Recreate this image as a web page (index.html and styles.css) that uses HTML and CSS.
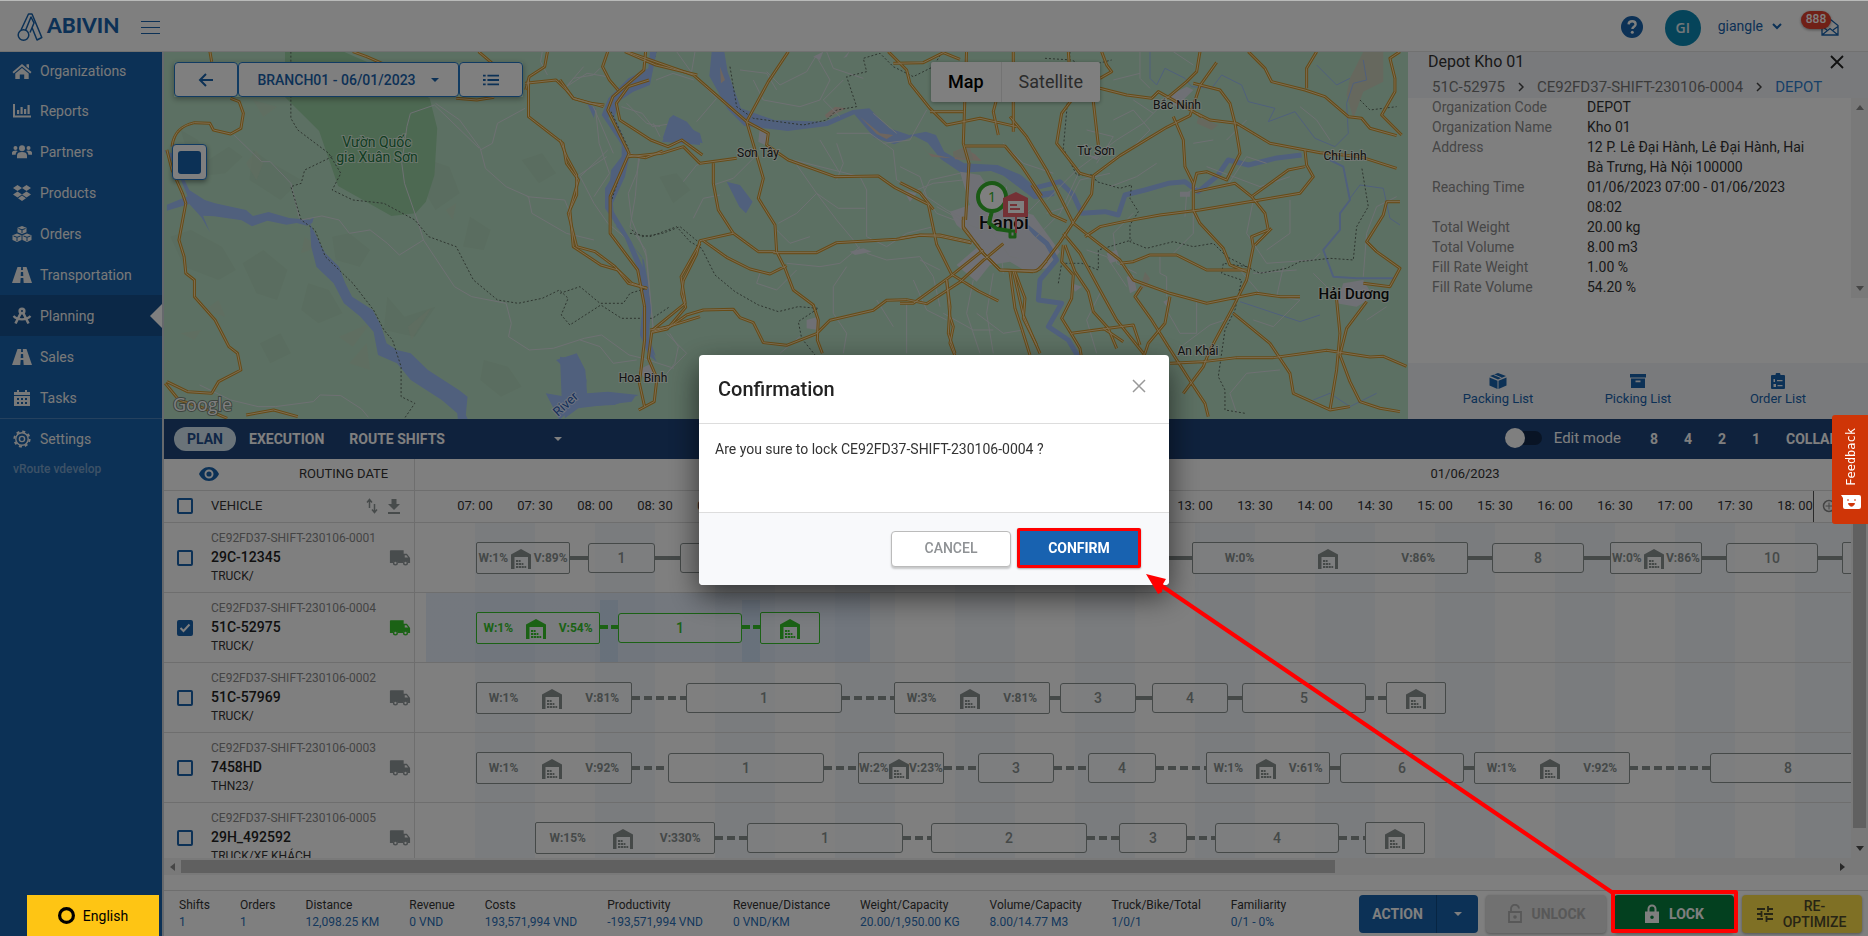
FILE: index.html
```html
<!DOCTYPE html>
<html lang="en">
<head>
<meta charset="utf-8">
<title>Planning</title>
<link rel="stylesheet" href="styles.css">
</head>
<body>
<svg class="defs" aria-hidden="true">
  <symbol id="warehouse" viewBox="0 0 20 20"><path fill="currentColor" d="M0 20V5.500L10 0l10 5.500V20h-3V8H3.500v12z"/><path d="M5 12h4.600M5 15h7.400M5 18h10.200" fill="none" stroke="currentColor" stroke-width="2.200" stroke-dasharray="2.200 .6"/></symbol>
  <symbol id="truck" viewBox="0 0 24 18"><path fill="currentColor" d="M2 1h14v4h3.500L23 9.500V15h-2.100a3 3 0 0 0-5.800 0H9.900a3 3 0 0 0-5.800 0H1V2a1 1 0 0 1 1-1z"/><circle cx="7" cy="15" r="2" fill="none" stroke="currentColor" stroke-width="1.500"/><circle cx="18" cy="15" r="2" fill="none" stroke="currentColor" stroke-width="1.500"/><path d="M17.200 6.500h1.800l1.900 2.500h-3.700z" fill="#fff"/></symbol>
  <symbol id="road" viewBox="0 0 20 18"><path fill="currentColor" d="M5.500 1h3.700l-.2 3h2l-.2-3h3.700L20 17h-8.300l-.4-5H8.700l-.4 5H0zM8.900 6l-.2 4h2.600l-.2-4z" fill-rule="evenodd"/></symbol>
</svg>

<header class="topbar">
  <svg class="logo" viewBox="16 10 28 30"><g fill="none" stroke="#1862ac" stroke-width="1.500" stroke-linejoin="round"><circle cx="23.500" cy="33" r="5.300"/><path d="M21 28l7.500-16h3.500l9.800 23.500-4.800 2.500-5-12.500M25.500 28.500L31 15l3 6-4 9.500"/></g></svg>
  <span class="brand">ABIVIN</span>
  <button class="burger" aria-label="Menu"><i></i><i></i><i></i></button>
  <div class="spacer"></div>
  <svg class="help" viewBox="0 0 22 22"><circle cx="11" cy="11" r="11" fill="#1862ac"/><path d="M7.600 8.300c.3-4 7-4 7 0 0 2.500-3.200 2.300-3.200 4.700" fill="none" stroke="#fff" stroke-width="2.400"/><circle cx="11.300" cy="16.300" r="1.500" fill="#fff"/></svg>
  <span class="avatar">GI</span>
  <button class="user">giangle <svg viewBox="0 0 10 7"><path d="M1 1l4 4 4-4" fill="none" stroke="currentColor" stroke-width="2"/></svg></button>
  <span class="mail"><svg viewBox="0 0 18 18"><path d="M1 7.500L9 1l8 6.500V17H1zM1 8.500l5 3.500M17 8.500L12 12M1 17l8-6.500 8 6.500" fill="none" stroke="#1862ac" stroke-width="1.300"/></svg><b class="badge">888</b></span>
</header>

<div class="shell">
<nav class="sidebar">
  <a href="#"><svg viewBox="0 0 20 18"><path fill="currentColor" d="M10 2l9.500 8-1.200 1.400L10 4.600l-8.300 6.800L.5 10zM14.500 2.200H17v4.300l-2.500-2zM3.300 11.500L10 6l6.700 5.500V17h-4.500v-4.500H7.800V17H3.300z"/></svg>Organizations</a>
  <a href="#"><svg viewBox="0 0 20 18"><path fill="currentColor" d="M1 2h2v11.500h16v2H1zM5 8h2.200v4H5zM8.500 5h2.200v7H8.500zM12 7h2.200v5H12zM15.500 3h2.200v9h-2.200z"/></svg>Reports</a>
  <a href="#"><svg viewBox="0 0 22 18"><g fill="currentColor"><circle cx="11" cy="5" r="3.300"/><circle cx="3.800" cy="4.500" r="2.200"/><circle cx="18.200" cy="4.500" r="2.200"/><path d="M5.500 16v-3c0-3 2-4 5.500-4s5.500 1 5.500 4v3zM0 12V9.500C0 7.500 5 6.500 6.500 8c-2 1-2.300 2.500-2.500 4zM22 12V9.500c0-2-5-3-6.500-1.500 2 1 2.300 2.500 2.500 4z"/></g></svg>Partners</a>
  <a href="#"><svg viewBox="0 0 20 18"><path fill="currentColor" d="M5.500 1L10 4 5.500 7 1 4zM14.500 1L19 4l-4.500 3L10 4zM5.500 7.500l4.500 3-4.500 3-4.500-3zM14.500 7.500l4.500 3-4.500 3-4.500-3zM10 11.500l4 2.700-4 2.800-4-2.800z"/></svg>Products</a>
  <a href="#"><svg viewBox="0 0 20 18"><g fill="currentColor"><path d="M10 1l4.500 1.700v4.600L10 9 5.500 7.300V2.700zM5 8.500l4.500 1.700v4.900L5 17 .5 15.100v-4.900zM15 8.500l4.500 1.700v4.900L15 17l-4.500-1.900v-4.900z"/></g><path d="M6.500 3.500l3.500 1.300 3.500-1.300M10 5v3M1.500 11L5 12.300 8.500 11M5 12.300V16M11.500 11l3.500 1.300 3.500-1.300M15 12.300V16" fill="none" stroke="#1862ac"/></svg>Orders</a>
  <a href="#"><svg viewBox="0 0 20 18"><use href="#road"/></svg>Transportation</a>
  <a href="#" class="active"><svg viewBox="0 0 20 18"><g fill="none" stroke="currentColor" stroke-width="2.600"><circle cx="10" cy="4" r="2.300"/><path d="M8.800 6L3.500 16.500M11.200 6l5.300 10.500"/><path d="M1.500 9c4 4.500 13 4.500 17 0" stroke-width="2.200"/></g></svg>Planning</a>
  <a href="#"><svg viewBox="0 0 20 18"><use href="#road"/></svg>Sales</a>
  <a href="#"><svg viewBox="0 0 20 18"><path fill="currentColor" d="M2 3h3V1h2v2h6V1h2v2h3v3H2z"/><path fill="currentColor" fill-rule="evenodd" d="M2 7h16v10H2zM5 9v2h2V9zM9 9v2h2V9zM13 9v2h2V9zM5 13v2h2v-2zM9 13v2h2v-2zM13 13v2h2v-2z"/></svg>Tasks</a>
  <a href="#" class="settings"><svg viewBox="0 0 20 18"><g fill="none" stroke="currentColor"><circle cx="10" cy="9" r="6.200" stroke-width="1.400"/><circle cx="10" cy="9" r="2.600" stroke-width="1.400"/><circle cx="10" cy="9" r="7.600" stroke-width="2" stroke-dasharray="3 2.970"/></g></svg>Settings</a>
  <p class="version">vRoute vdevelop</p>
</nav>

<main class="main">
<section class="upper">
  <div class="map">
    <svg class="mapart" viewBox="164 52 1244 367" preserveAspectRatio="xMidYMid slice">
      <defs>
        <g id="roads">
          <g transform="translate(160 50) scale(.3444 .3333)">
            <path d="M35 290C40 240 70 225 100 218L145 220 155 240 205 252 235 235 242 190 230 155 205 145M145 5l5 30M560 5l40 15 45 20M925 5l40 35M860 145l60 5 50-8M1125 5l-8 45-45 30-10 40M1300 5l-15 45 20 40 25 30M1060 100l90-10 30 30 20 25 50 15 40 5M1070 90v110l100 80 10 60 35 50-25 90 10 110 80 55 50 15 40 40 45 15M1350 5l90 40 120 30M1420 90l-60 20-35 50 10 50 90 60 50 20 40-20 60 45M1360 315l50 8 50-20M1410 5l-5 55-90 80-15 40 62 130-55 130v110l80 110 20 110v100l-15 130 15 70M1568 800l-140 45-10 80 25 60-8 70-45 25M1430 840l95-80-12-80 55-100M20 300l15 60 30 70 10 30-20 110 15 50 5 50 25 20v50l60 70 40 80 25 20 10 50-65 35-20 35-70-5-60-30M15 1000l40 50 60 20 80 35M250 1095l80-15 70 20"/>
          </g>
          <g transform="translate(560 0) scale(.3333)">
            <path d="M0 240l40 55 90 25M200 155l200 70 160 140 65-120 60-90M560 365l65 35-5 35 65 45 140 50 130-2 50 35 100 50 25 120 45 90 80 50 60 30M560 365l50 170-15 60 50 80 5 80 25 50 25 65 60 45 15 45-3 60 15 40M0 420l20 50 30 55v60L25 640l25 100 55 15 60 45 40 50 55 15M205 470l100-10 65-20 50 50 110-15M460 490v60l15 80 45 70 75 55h50M640 758h130l60-30 180-10 70-12 60 3 95 20M520 700l-100 22-10 40-40 80-5 40 12 40-55 65-45 10M430 722l70 50 70 35 60 15 50-25M270 990l60-10 50-35 50-15 90-2 20 25 40 15 30 60 70 8 90-35 40-40 130-30 40-30 60-2 60 12 100-65 70-65 60-50M985 155l55 55 10 40 60 75 50 50 100-20 110 25M1220 150l-10 280 17 60-10 170M1360 155v240M1320 260l-20 75 15 70M1215 438h120l50 60 60 90M1000 190l90-2 60-30 50 20M1110 335h100M1210 660v25l60 75 50 50 110 3 30-30M1160 840l10 110 10 30-10 50 20 50M1350 815l15 110 20 60 25 80M1365 815l30 80-5 60 40 80"/>
          </g>
          <g transform="translate(900 0) scale(.3333)">
            <path d="M400 815l20-8 60-80 60-90 35-55 5-55 80-60 140-85 70-35 30-90 50-70M575 530l-35-10-70-90 15-90 30-40-10-145M600 265l80 20 75 10 20-20 80 45 50 30M580 305l15 130M605 155l15 40 15 20-35 20M900 155l-10 60-30 30-60 50M820 350l30 70 5 80 25 50v80l20 40 70 75 20 50 50 20M880 250l80 20 30 40 15 60 15 90-40 80-60-25-30 5-10 40M890 340l40 20 80 10 50 30 50 30 150 28 120 12 110 35M1045 155l50 50 20 40 100 25 60 20 70 60 40 5 25 30 80 22M1250 155l-30 50v60M1500 155l-30 20 15 60v40l-40 70 60 60M1215 450l5 45 20 35-40 50-120 20-180 30-120 15-110 20-70 15-45 30M1215 500l-50 10-110 80M1500 605h-40l-10 40-50 80 30 30 70 50-30 55-80-10M330 350l50 60 60 100 80 160 50 40 90 70 40 60 110 40 110 30 150-30 70 10h60M490 700l50 60 60 110 50 90 80 100M500 665l-45-20-60-90M885 575l120-25 50 40 40 50 10 50-50 20 5 30-20 100-40 80-70 130-20 50-60 80M1115 685l-50 50M660 790l40-5 50-20h80l90 45h120M490 735l-5 50 35 40-5 70-30 60 25 40 30 50 10 60M495 735l30 80 40 60 15 60 45 50 25 60M515 1000l110-15 75-10 20 60M725 860l-20 30 50 70 50 80 70 110 40 60 10 40M810 890l-15 80-50 60-10 30-60 80M610 985l60 40M0 548l60 30 40 50M0 715l60-10h60l90 20M190 650v30l60 80 50 50 100 5M0 910h40l110-80 100-80M140 840l10 80-5 80 20 60M340 815l30 130 50 115M810 1090l100-5 100-12h110l160-22 130 20 40-2 70 30M1000 940l110 90 60 90 10 60 110 50 60-10M1310 900l10 100-10 110-20 120M1400 905l-60 80-20 80 30 80 30 60 60 20 60 10"/>
          </g>
        </g>
      </defs>
      <path fill="#b9e1c6" d="M164 52h1244v367H164z"/>
      <g transform="translate(160 50) scale(.3444 .3333)">
        <g fill="#b0d3b9" opacity=".45"><path d="M60 240l50 30 30 60 60-40 40 30-50 50-90 10zM270 300l40 30 100 60-60 60-90-60zM30 560l60-20 90 50 40 70-50 30-100-40zM240 640l60-40 70 60-30 90-60-20zM430 700l60 20 40 70-70 30-50-40zM660 740l50 60 90-30-60 90-90-20zM780 330l60 20 30 80-70 50-40-70zM1050 330l60-20 40 60-50 30zM500 560l50-10 60 50-30 50-70-20zM900 500l60 40-20 60-60-10zM940 930l70 20 40 60-60 30-60-50zM290 880l60-30 30 60-60 30zM1450 380l50-10 40 50-50 40z"/></g>
        <g fill="#c6dac0" opacity=".5"><path d="M250 340l30-40 20 40-20 50zM520 860l90-40-50 70zM720 830l70-60-60 100zM130 780l40-30 20 50zM550 940l50-60 10 80zM270 150l70 20-40 30zM60 850l60-10-20 30zM830 480l30-20-10 50zM420 560l40 30-50 20z"/></g>
        <path fill="#9bd2a5" d="M363 5h170l110 50 140 90 22 90-8 140-25 80-30 35-70 8-155-90-55-165-100-103z"/>
        <g fill="#a0c0fa"><path d="M10 300l25 10 50 110 45 30 30 10 90 20 20 18 45-12 60 18 60 5 12-8-5 18-15 8-30-8-30 5-55-12-45 17-30-18-80-12-32-2 20 50-25-45-35-40-65 20v-18l60-25-35-90zM435 520l25 50 20 40 40 40 18 50 20 40 60 40 25 50 15 50 30 20 40 10 50 50 90 60 25 20-5 55 20 45h-40l-5-50-45-40-90-60-40-50-55-25-13-70-38-45-48-40-30-60-50-50-15-60zM1150 930l60-20 25 50 5 70 60-5 90 10-70 30-120 5-40 40-40-80 60 10 10-70zM1490 195l40 20 38 50v20l-110-10zM1400 60l20 30-85 60-15 50 45 110-15 70-35 80 5 60 85 110 20 110-5 120 20 60-25-30-10-160-5-110-75-90-25-80 10-90 45-60-50-130 25-55zM1240 160l25 15-5 30z"/></g>
        <g class="minor"><path d="M215 255l60 60 20 20h25l60 65 25 105M410 510l60-12 50 12 30 40 60-10 50 40 35 35 70-45M765 570l-15-50-40-120-8-60 15-110 10-40 70-25 130 130M765 570l90 140 50 30 100 20 15 60-8 40 60 40 70-5 90-30 50-10 80 60 40 10 90 30M800 160l70 50 60 85 15 60 60 55 65 30 10 50 100 60 80 20M1060 175l-80 45-15 60-35 20M1065 440l110 10 20 50M1230 50l-50 60M1265 180l10 100 30 90-45 70M1300 300l-80 80 40 80 40 60 60 50M1390 320l-10 120-15 90 45 70 22 240M1480 850l25 40-10 50-30 40M115 1005l90 45 80 20h50l110-15 20-20 60 2 60 40 20 25M1110 5l-5 30 20 40M1440 90l50-20 60 20M1340 170l60 20 30 40 60-10M1180 110l60-40 60 10"/></g>
        <path class="border" d="M380 5v200l20 35 90 70 35 60-25 50 60 30 90 10 90 50 40 50 80 30 50 100 70 60 60 10 70-15 50-25 25 25-20 50 25 30 90-60 60 40 90 0 50-35M500 320l-80 40-10 40-30 10 30 100 40 30 30 80 80 80 60 80 30 60 25 30 25 80v90l40 20-60 90"/>
        <path class="border" d="M1370 540l30 20 60-10 50-20 58 50M1440 5l-20 90-90 40-25 40 55 120-50 160"/>
      </g>
      <g transform="translate(560 0) scale(.3333)">
        <g fill="#a0c0fa"><path d="M455 155h38l10 60 40 110 100 35 150 5 85-35 50-5 60 60 60 20 50-10 30 10 25 50 60 35 100 5 70 30 60 50 40-5v18l-60 10-90-70-40-15-90 5-60-40-40-50-40-20-60 25-60-20-60-70-80 35-120 15-130-15-50-50-55-100zM270 155h20l-20 100-50 20-60 40-15 40 60 90-5 50-45 80v50l60 100 40 90 20 110-15 90 30 70-25-20-25-60 10-110-10-70-45-110-60-90v-60l50-80v-50l-60-90 20-50 60-60 60-30zM340 345l20 25 60 30 8 30-40-10-80-5 20-60zM500 545l40 10 38 50-20 35-20-20zM0 1070l60 10 20 60-5 50 60-10 90 10-10 15-160 20-40 30-10-60z"/></g>
        <path fill="#dccabd" d="M480 200l15 40-12 10zM795 345l30-25 35 5-60 30zM900 350l60 50 40 5-20 12-30-15zM1045 400l60 60 70 15-60-5zM1180 455l30-12 35 20 20 20-80-5z"/>
        <g class="minor"><path d="M350 155l50 70 70 70-60 70M620 215l40 40 80-40 30-50M580 240l30 60 110 20 60-20 30-60-40-70M800 155l20 50 90 30M200 310l60 60 40 10M20 260l20-25 60-10 20-20M405 155l-10 60M540 210l80 10 30 50M50 530l90-60M100 320l60 140M210 460l30 10-10 50-25 60 10 80 45 110 20 220M370 545l40-50 100-20M460 555l60-20 70-70M700 480l70 100-60 60-55 30M700 480l200 50 20 40v140l60 30 60-40 80-20M770 580l60 80 50 60 20 30M770 580l65 45h80M830 430l20 60-20 50M830 400l100 0 70 50 10 90M840 520l-60-100M940 340l70 60M1100 330l-50 90-80 10M1010 540l60 30 50-20 90-10M920 760l60 20 100-10 40 60 20 90M680 790l100 10 60-10 60-50M650 690l40 40 60-20M600 820l-10 30 60 20 60-60M400 655l30-60 50-10M860 800l-40 60 0 80 40 60-10 60M1080 780l60 30M1200 520l-90 20-20 40 40 60 80 30M1240 840l-20 100 40 120M1300 820l-20 120 20 120M320 1000l60 60-60 60M60 1020l60 20 40 50 70-10M660 1060l60-50M850 240l-60 60 50 50M300 410l-20-40M950 900l50 80M1040 910l0 150M1440 600l-60 60M1150 940l90 50 60 0M1250 620l80 70 90 20M1340 560l-20 160 10 100M1230 560l50 100 100 60"/></g>
        <path fill="#dfe1ea" d="M1200 515l60 10 60 90 100 30 80 110-40 50-60 10-50-30-60 10-40 50-60-50 70-60-70-60-20-40 60-20zM740 960l35-10v40l-35-5zM600 380l25 20-10 35-20-10zM860 170l10-18-20 22zM760 170l30-15-10 25zM1030 570l40 10-20 25zM235 1110l40-20 20 50-30 10zM870 755l40-10 25 10-50 10z"/>
        <path class="border" d="M510 200l20 120 50 35 150 20 70-15 30-30 60-10-30-90 60-15-10-40 50-15 40 40 60 30 60-30 30-50M210 700l60 10 80-30 40 45 35 20 40 80 60 50 70 40 60 20 60-15 60 5-60 40 10 50 40 50M0 880l60-20 60 50h70l20-30 50-15"/>
        <path class="minor" d="M1130 620l110 60 110 30 90-10M1230 740l60-80 90-10M1290 690l60 80 50 10"/>
      </g>
      <g transform="translate(900 0) scale(.3333)">
        <path fill="#ccd0bd" d="M1390 155h60v90l-60 30-30 80-20-70 10-50zM895 350l60 25-20 15-45-20zM735 815l15 20-10 25-20 10zM160 455l50-15 10 40-60-10z"/>
        <g class="water"><path d="M300 510l80 60 40-10 60-15 40 40 25 55 70-5 40 10 20-60 60-15 70-20 50-5 40 30 60-50 30-45 60 15 80-20 80-10"/><path d="M380 680l60 50 30 50-50 60-5 60 70 10-40 70 60 40 30 50"/><path class="stream" d="M1290 480l40 20 20 100-30 40v50l-50 60 30 80 70 5h110"/><path class="brook" d="M750 155v80l20 20 25-50 60 30 20 25 60 5 30-40 60 30 20 50 80 20-20 40 80-30 60 80 60 25 40-40-5-90 20-60 40-10-10-60"/><path class="brook" d="M1350 595l30-40 70 10 20 90 30 20M1250 195l60 60 40-20M1020 905l180 60 60-20M1240 1200l50-20 60 40 80-40"/></g>
        <g class="minor"><path d="M0 500l60 30 20 60 60 40 40 20M440 600l90-90 60-45 60-45 80-50 80-80M440 640l60-20 40-80 90-20M560 390l80 20-50 80M640 360l60-30 50 60-60 60-60 30M630 560l80-30 60-40M700 300l60 40M920 500l160 60 90-30M940 420l-60 10M780 770v50l20 10 0 60M980 420l60-60M890 560l-30 20-5 70M1060 600l-20 100 60 90 140-10 20-20M1170 600v100l-70 50M1390 830l10-130 30-80 60-30M700 640l-60 60 10 90 60 30M560 750l60 20 60 90M880 640v60l-60 60M1020 810l60 70 120 20M1200 900l-80 80-60-20M850 1035l80-60 60-20M990 1180l50-60 100-10M1240 820l60 60 30 10M1130 890l20-90M600 880l-40 80 30 100M800 930l40 70 50 0v-100M720 155l0 80 30 30M820 155l60 40M400 720l80-80 60-130M460 520l-90-30-60-60M230 940l80 60 60-10M40 840l40 90 60 30M1010 1240l-20-60M1400 960l60-40M1060 820l130-10M1200 320l50 40 40 60M640 240l80-20M980 560l60-90 60 20"/></g>
        <path fill="#dfe1ea" d="M800 290l60-30 20 10-50 50zM560 465l40 5-10 10zM430 740l-60-70-30 60 20 50 60 10zM620 760l30-10 10 30-30 10zM680 830l20-5 10 45-20 10zM790 905l20-10-5 30zM1330 850l60-10 30 50-50 30-60-10zM840 575l30 0v15h-30zM515 850l30 10-20 15z"/>
        <path class="border" d="M510 155l-10 180-10 110 40 80 50 0 10 20 70 20 35-10-5 40 25 40-25 40 0 50 50 20 80-20 60 15 60-10 40 40 100 50 80-15 40-20 90-10 70 5 10-100 35-60-20-120M475 850l10-60 60 0 50 20v-60l100-30M1040 800l-70-10-5 30 60 20-20 90-30 60-20 140 20 40 0 60 60 10M435 175l80 5 40 20 80-20M1380 300l30 30 80-10"/>
      </g>
      <use href="#roads" class="roadEdge"/>
      <use href="#roads" class="roadFill"/>
      <g class="places">
        <text x="758" y="157">Sơn Tây</text><text x="643" y="382">Hoa Binh</text><text x="1177" y="109">Bắc Ninh</text><text x="1096" y="155">Từ Sơn</text><text x="1345" y="160">Chí Linh</text><text x="1198" y="355">An Khải</text>
        <text class="town" x="1354" y="299">Hải Dương</text><text class="city" x="1004" y="229">Hanoi</text>
        <text class="park" x="377" y="147">Vườn Quốc</text><text class="park" x="377" y="162">gia Xuân Sơn</text>
        <text class="river" transform="translate(558 417) rotate(-43)">River</text>
        <text class="google" x="173" y="411">Google</text>
      </g>
      <g fill="none" stroke="#36b52c" stroke-width="4"><path d="M992 211l-3 12 8 6 14 2"/><path d="M1010 231h5v6h-5z" stroke-width="3"/><circle cx="992" cy="197" r="14" fill="#fff"/></g>
      <text class="pin" x="992" y="202">1</text>
      <g fill="#e8626a"><path fill-rule="evenodd" d="M1003 198l13-6 12 6v19h-25zM1008 201v12h16v-12z"/><path d="M1008 201h16v12h-16z" fill="#fff"/><path d="M1010 204h7v2h-7zM1010 208h10v2h-10zM1015 217h2v16h-2z"/></g>
    </svg>
    <div class="mapbar">
      <button class="mbtn" aria-label="Back"><svg viewBox="0 0 16 14"><path d="M15 7H2M8 1L2 7l6 6" fill="none" stroke="currentColor" stroke-width="2"/></svg></button>
      <button class="mbtn wide">BRANCH01 - 06/01/2023 <svg viewBox="0 0 10 6"><path fill="currentColor" d="M1 1h8L5 5z"/></svg></button>
      <button class="mbtn" aria-label="List"><svg viewBox="0 0 18 14"><path d="M5 2h13M5 7h13M5 12h13M0 2h3M0 7h3M0 12h3" fill="none" stroke="currentColor" stroke-width="2"/></svg></button>
    </div>
    <button class="layer" aria-label="Layers"><i></i></button>
    <div class="maptype"><button class="on">Map</button><button>Satellite</button></div>
  </div>

  <aside class="panel">
    <div class="phead">
      <div class="ptitle"><span>Depot Kho 01</span><button aria-label="Close"><svg viewBox="0 0 14 14"><path d="M1 1l12 12M13 1L1 13" stroke="#222" stroke-width="1.800"/></svg></button></div>
      <div class="crumbs"><span>51C-52975</span><svg viewBox="0 0 6 10"><path d="M1 1l4 4-4 4" fill="none" stroke="#444" stroke-width="1.500"/></svg><span>CE92FD37-SHIFT-230106-0004</span><svg viewBox="0 0 6 10"><path d="M1 1l4 4-4 4" fill="none" stroke="#444" stroke-width="1.500"/></svg><a href="#">DEPOT</a></div>
    </div>
    <div class="pscroll">
      <dl>
        <dt>Organization Code</dt><dd>DEPOT</dd>
        <dt>Organization Name</dt><dd>Kho 01</dd>
        <dt>Address</dt><dd>12 P. Lê Đại Hành, Lê Đại Hành, Hai Bà Trưng, Hà Nội 100000</dd>
        <dt>Reaching Time</dt><dd>01/06/2023 07:00 - 01/06/2023 08:02</dd>
        <dt>Total Weight</dt><dd>20.00 kg</dd>
        <dt>Total Volume</dt><dd>8.00 m3</dd>
        <dt>Fill Rate Weight</dt><dd>1.00 %</dd>
        <dt>Fill Rate Volume</dt><dd>54.20 %</dd>
      </dl>
      <div class="vbar faint"><i class="up"></i><i class="down"></i></div>
    </div>
    <div class="pfoot">
      <button><svg viewBox="0 0 18 16"><path fill="currentColor" d="M9 0l8 3-8 3.500L1 3zM.5 4.500l8 3.300V16l-8-3.500zM17.500 4.500l-8 3.300V16l8-3.500z"/><path d="M4.500 1.500l8 3.300" stroke="#f3f5f9"/></svg>Packing List</button>
      <button><svg viewBox="0 0 18 16"><path fill="currentColor" d="M1 1h16v3.500H1z"/><path fill="currentColor" fill-rule="evenodd" d="M2 5.500h14V15H2zM6.500 7.500v1.700h5V7.500z"/></svg>Picking List</button>
      <button><svg viewBox="0 0 18 16"><path fill="currentColor" fill-rule="evenodd" d="M3 2h3.500a2.500 2.500 0 0 1 5 0H15a1 1 0 0 1 1 1v12a1 1 0 0 1-1 1H3a1 1 0 0 1-1-1V3a1 1 0 0 1 1-1zM4.500 6v3H6V6zM8 7v1.300h5.500V7zM4.500 11v3H7v-3zM8.500 12v1.300h5V12z"/></svg>Order List</button>
    </div>
  </aside>
</section>

<section class="toolbar">
  <button class="pill">PLAN</button>
  <button>EXECUTION</button>
  <button class="shifts">ROUTE SHIFTS <svg viewBox="0 0 10 6"><path fill="currentColor" d="M1 1h8L5 5z"/></svg></button>
  <div class="spacer"></div>
  <label class="switch"><input type="checkbox"><span>Edit mode</span></label>
  <div class="zooms"><button>8</button><button>4</button><button>2</button><button>1</button></div>
  <button class="collapse">COLLAPSE ALL</button>
</section>

<section class="gantt">
  <div class="grow head1">
    <div class="left"><svg class="eye" viewBox="0 0 20 14"><path fill="#1862ac" fill-rule="evenodd" d="M10 0c5 0 8.500 3.500 10 7-1.500 3.500-5 7-10 7S1.500 10.500 0 7c1.500-3.500 5-7 10-7zm0 2.500a4.500 4.500 0 1 0 0 9 4.500 4.500 0 0 0 0-9z"/><circle cx="10" cy="7" r="2.600" fill="#1862ac"/></svg><span>ROUTING DATE</span></div>
    <div class="date">01/06/2023</div>
  </div>
  <div class="grow head2">
    <div class="left"><input type="checkbox" aria-label="Select all"><span>VEHICLE</span><svg class="sort" viewBox="0 0 12 16"><path d="M3.500 10V2M1 4.500L3.500 1.500 6 4.500M8.500 6v8M6 11.500l2.500 3 2.500-3" fill="none" stroke="#8f9696" stroke-width="1.500"/></svg><svg class="dl" viewBox="0 0 14 16"><path fill="#8f9696" d="M4.500 1h5v5H13l-6 6-6-6h3.500zM1 14h12v2H1z"/></svg></div>
    <div class="hours"><span>07: 00</span><span>07: 30</span><span>08: 00</span><span>08: 30</span><span>09: 00</span><span>09: 30</span><span>10: 00</span><span>10: 30</span><span>11: 00</span><span>11: 30</span><span>12: 00</span><span>12: 30</span><span>13: 00</span><span>13: 30</span><span>14: 00</span><span>14: 30</span><span>15: 00</span><span>15: 30</span><span>16: 00</span><span>16: 30</span><span>17: 00</span><span>17: 30</span><span>18: 00</span></div>
    <div class="zin"><svg viewBox="0 0 14 14"><path d="M7 3.500v7M3.500 7h7" stroke="#888"/><circle cx="7" cy="7" r="5.500" fill="none" stroke="#888" stroke-width="1.500"/></svg></div>
  </div>
  <div class="gscroll">
    <div class="rows">
      <div class="grow row">
        <div class="left"><input type="checkbox" aria-label="29C-12345"><div class="veh"><small>CE92FD37-SHIFT-230106-0001</small><strong>29C-12345</strong><span>TRUCK/</span></div><svg class="trk"><use href="#truck"/></svg></div>
        <div class="lane"><div class="depot" style="width:94px"><b>W:1%</b><svg><use href="#warehouse"/></svg><b>V:89%</b></div><i class="ln" style="width:18px"></i><div class="stop" style="width:67px">1</div><i class="ln" style="width:25px"></i><div class="stop" style="width:60px">2</div><i class="ln" style="width:452px"></i><div class="depot" style="width:276px"><b>W:0%</b><svg><use href="#warehouse"/></svg><b>V:86%</b></div><i class="ln" style="width:24px"></i><div class="stop" style="width:92px">8</div><i class="ln" style="width:26px"></i><div class="depot" style="width:92px"><b>W:0%</b><svg><use href="#warehouse"/></svg><b>V:86%</b></div><i class="ln" style="width:24px"></i><div class="stop" style="width:92px">10</div><i class="ln" style="width:24px"></i><div class="depot" style="width:92px"></div></div>
      </div>
      <div class="grow row sel">
        <div class="left"><input type="checkbox" checked aria-label="51C-52975"><div class="veh"><small>CE92FD37-SHIFT-230106-0004</small><strong>51C-52975</strong><span>TRUCK/</span></div><svg class="trk"><use href="#truck"/></svg></div>
        <div class="lane"><div class="depot" style="width:124px"><b>W:1%</b><svg><use href="#warehouse"/></svg><b>V:54%</b></div><i class="ln" style="width:18px"></i><div class="stop" style="width:124px">1</div><i class="ln" style="width:18px"></i><div class="depot" style="width:60px"><svg><use href="#warehouse"/></svg></div></div>
      </div>
      <div class="grow row">
        <div class="left"><input type="checkbox" aria-label="51C-57969"><div class="veh"><small>CE92FD37-SHIFT-230106-0002</small><strong>51C-57969</strong><span>TRUCK/</span></div><svg class="trk"><use href="#truck"/></svg></div>
        <div class="lane"><div class="depot" style="width:156px"><b>W:1%</b><svg><use href="#warehouse"/></svg><b>V:81%</b></div><i class="ln dash" style="width:54px"></i><div class="stop" style="width:156px">1</div><i class="ln dash" style="width:52px"></i><div class="depot" style="width:156px"><b>W:3%</b><svg><use href="#warehouse"/></svg><b>V:81%</b></div><i class="ln" style="width:10px"></i><div class="stop" style="width:76px">3</div><i class="ln" style="width:16px"></i><div class="stop" style="width:76px">4</div><i class="ln" style="width:14px"></i><div class="stop" style="width:124px">5</div><i class="ln dash" style="width:20px"></i><div class="depot" style="width:60px"><svg><use href="#warehouse"/></svg></div></div>
      </div>
      <div class="grow row">
        <div class="left"><input type="checkbox" aria-label="7458HD"><div class="veh"><small>CE92FD37-SHIFT-230106-0003</small><strong>7458HD</strong><span>THN23/</span></div><svg class="trk"><use href="#truck"/></svg></div>
        <div class="lane"><div class="depot" style="width:156px"><b>W:1%</b><svg><use href="#warehouse"/></svg><b>V:92%</b></div><i class="ln dash" style="width:36px"></i><div class="stop" style="width:156px">1</div><i class="ln dash" style="width:34px"></i><div class="depot" style="width:86px"><b>W:2%</b><svg><use href="#warehouse"/></svg><b>V:23%</b></div><i class="ln dash" style="width:34px"></i><div class="stop" style="width:76px">3</div><i class="ln dash" style="width:34px"></i><div class="stop" style="width:68px">4</div><i class="ln dash" style="width:50px"></i><div class="depot" style="width:124px"><b>W:1%</b><svg><use href="#warehouse"/></svg><b>V:61%</b></div><i class="ln" style="width:10px"></i><div class="stop" style="width:124px">6</div><i class="ln" style="width:10px"></i><div class="depot" style="width:156px"><b>W:1%</b><svg><use href="#warehouse"/></svg><b>V:92%</b></div><i class="ln dash" style="width:80px"></i><div class="stop" style="width:156px">8</div></div>
      </div>
      <div class="grow row">
        <div class="left"><input type="checkbox" aria-label="29H_492592"><div class="veh"><small>CE92FD37-SHIFT-230106-0005</small><strong>29H_492592</strong><span>TRUCK/XE KHÁCH</span></div><svg class="trk"><use href="#truck"/></svg></div>
        <div class="lane late"><div class="depot" style="width:180px"><b>W:15%</b><svg><use href="#warehouse"/></svg><b>V:330%</b></div><i class="ln dash" style="width:32px"></i><div class="stop" style="width:156px">1</div><i class="ln dash" style="width:28px"></i><div class="stop" style="width:156px">2</div><i class="ln dash" style="width:32px"></i><div class="stop" style="width:68px">3</div><i class="ln dash" style="width:28px"></i><div class="stop" style="width:124px">4</div><i class="ln dash" style="width:26px"></i><div class="depot" style="width:60px"><svg><use href="#warehouse"/></svg></div></div>
      </div>
    </div>
    <div class="vbar"><b></b><i class="down"></i></div>
  </div>
  <div class="hbar"><i class="lt"></i><div class="htrack"><b></b></div><i class="rt"></i></div>
</section>

<footer class="stats">
  <div><span>Shifts</span><em>1</em></div>
  <div><span>Orders</span><em>1</em></div>
  <div><span>Distance</span><em>12,098.25 KM</em></div>
  <div><span>Revenue</span><em>0 VND</em></div>
  <div><span>Costs</span><em>193,571,994 VND</em></div>
  <div><span>Productivity</span><em>-193,571,994 VND</em></div>
  <div><span>Revenue/Distance</span><em>0 VND/KM</em></div>
  <div><span>Weight/Capacity</span><em>20.00/1,950.00 KG</em></div>
  <div><span>Volume/Capacity</span><em>8.00/14.77 M3</em></div>
  <div><span>Truck/Bike/Total</span><em>1/0/1</em></div>
  <div><span>Familiarity</span><em>0/1 - 0%</em></div>
  <section class="actions">
    <div class="split"><button>ACTION</button><button aria-label="More actions"><svg viewBox="0 0 10 6"><path fill="currentColor" d="M1 1h8L5 5z"/></svg></button></div>
    <button class="act unlock" disabled><svg viewBox="0 0 16 20"><path d="M4 8V5a4 4 0 0 1 8-.5M2 8h12v10H2z" fill="none" stroke="currentColor" stroke-width="1.800"/><circle cx="8" cy="13" r="1.800" fill="currentColor"/></svg>UNLOCK</button>
    <button class="act lock"><svg viewBox="0 0 16 20"><path d="M4.500 8V5a3.500 3.500 0 0 1 7 0v3" fill="none" stroke="currentColor" stroke-width="2"/><path fill="currentColor" fill-rule="evenodd" d="M1 7.500h14V19H1zM8 11.400a1.800 1.800 0 1 0 0 3.600 1.800 1.800 0 0 0 0-3.600z"/></svg>LOCK</button>
    <button class="act reopt"><svg viewBox="0 0 16 16"><path d="M0 3h8M11 3h5M11 0v6M0 8h4M7 8h9M4.500 5v6M0 13h6M9 13h7M9.500 10v6" fill="none" stroke="currentColor" stroke-width="1.800"/></svg><span>RE-OPTIMIZE</span></button>
  </section>
</footer>
</main>
</div>

<div class="scrim">
  <div class="modal" role="dialog" aria-label="Confirmation">
    <div class="mhead"><h2>Confirmation</h2><button aria-label="Close dialog"><svg viewBox="0 0 14 14"><path d="M1 1l12 12M13 1L1 13" stroke="#999" stroke-width="1.500"/></svg></button></div>
    <p>Are you sure to lock CE92FD37-SHIFT-230106-0004 ?</p>
    <div class="mfoot"><button class="cancel">CANCEL</button><button class="confirm">CONFIRM</button></div>
  </div>
</div>

<button class="lang"><svg viewBox="0 0 16 16"><ellipse cx="8" cy="8" rx="6.500" ry="6.500" fill="none" stroke="#000" stroke-width="3"/></svg>English</button>
<button class="feedback"><svg viewBox="0 0 20 16"><path fill="#fff" d="M0 1h18a2 2 0 0 1 2 2v10a2 2 0 0 1-2 2H4a2 2 0 0 1-2-2V4z"/><path d="M7 5v2M14 5v2M7.500 9.500c1 3.500 5 3.500 6 0z" stroke="#cf3507" fill="#cf3507"/></svg><span>Feedback</span></button>
<i class="frame"></i>
<svg class="arrow" viewBox="0 0 470 322"><path d="M10 8L467 319" stroke="#f00" stroke-width="4"/><path fill="#f00" d="M0 0l20 5-3 5-1 8-4 2z"/></svg>
</body>
</html>
```
FILE: styles.css
```css
* { box-sizing: border-box; }
body { margin: 0; height: 100vh; display: flex; flex-direction: column; overflow: hidden; background: #fff; font: 14px/20px Roboto, "Noto Sans", sans-serif; color: #333; }
button { border: 0; background: none; padding: 0; margin: 0; font: inherit; color: inherit; cursor: pointer; }
a { text-decoration: none; }
svg { flex: none; display: block; }
em, i { font-style: normal; }
.defs { position: absolute; width: 0; height: 0; }
.spacer { flex: 1; }

.topbar { flex: none; height: 52px; display: flex; align-items: center; padding: 2px 29px 0 16px; border-top: 1px solid #b9bab9; border-bottom: 1px solid #e2e2e2; }
.logo { width: 28px; height: 30px; }
.brand { margin: 0 0 4px 3px; font: 900 21px/24px Lato, sans-serif; color: #1862ac; }
.burger { margin-left: 22px; display: flex; flex-direction: column; gap: 5px; width: 19px; }
.burger i { height: 1px; background: #1862ac; }
.help { width: 22px; height: 22px; margin-right: 22px; }
.avatar { width: 36px; height: 36px; border-radius: 50%; background: #0a89b5; color: #e8eef2; display: grid; place-items: center; margin: 2px 17px 0 0; font: 600 14px/20px "Open Sans", sans-serif; }
.user { display: flex; align-items: center; gap: 9px; color: #1862ac; margin: 0 39px 2px 0; }
.user svg { width: 10px; height: 7px; }
.mail { position: relative; }
.mail svg { width: 18px; height: 18px; }
.badge { position: absolute; right: 8px; bottom: 7px; width: 30px; height: 18px; border-radius: 9px; background: #e0402f; color: #fff; font: 500 12px/17px Roboto, sans-serif; text-align: center; box-shadow: 0 1px 3px #0006; }

.shell { flex: 1; min-height: 0; display: flex; }
.sidebar { flex: none; width: 164px; background: #1862ac; border-right: 2px solid #ccd2da; color: #fff; }
.sidebar a { height: 41px; display: flex; align-items: center; gap: 8px; padding-left: 12px; color: #f2f2f2; position: relative; }
.sidebar a:first-child { height: 38px; }
.sidebar svg { width: 20px; height: 18px; }
.sidebar .active { background: #16508e; }
.sidebar .active::after { content: ""; position: absolute; right: 0; border: 12px solid transparent; border-right-color: #fff; border-left: 0; }
.sidebar .settings { border-top: 1px solid #4a82bc; }
.version { margin: 0; padding: 1px 13px; font-size: 12px; line-height: 18px; font-weight: 500; color: #7ba3cc; }

.main { flex: 1; min-width: 0; display: flex; flex-direction: column; }
.upper { flex: none; display: flex; height: 367px; }
.map { flex: 1; min-width: 0; position: relative; overflow: hidden; }
.mapart { width: 100%; height: 100%; }
.mapart path { vector-effect: non-scaling-stroke; stroke-linejoin: round; }
.minor { fill: none; stroke: #dde2e6; stroke-width: 1; }
.border { fill: none; stroke: #5c6b60; stroke-width: 1; stroke-dasharray: 2 2; }
.water { fill: none; stroke: #a0c0fa; stroke-width: 5; }
.stream { stroke-width: 2; }
.brook { stroke-width: 1; }
.roadEdge { fill: none; stroke: #cf962f; stroke-width: 3; }
.roadFill { fill: none; stroke: #f9dca6; stroke-width: 1; }
.places { font: 12px Roboto, sans-serif; text-anchor: middle; fill: #222; stroke: #fff9; stroke-width: 2; paint-order: stroke; }
.town { font-size: 15px; font-weight: 500; fill: #111; }
.city { font-size: 19px; font-weight: 500; fill: #111; }
.park { font-size: 14px; fill: #257a43; }
.river { font-size: 13px; fill: #2c5fb5; text-anchor: start; }
.google { font: 500 18px "Open Sans", sans-serif; fill: #fff; stroke: #7b8a7f; text-anchor: start; }
.pin { font: 14px "Noto Sans", sans-serif; fill: #36b52c; text-anchor: middle; }
.mapbar { position: absolute; left: 10px; top: 10px; display: flex; box-shadow: 0 2px 6px #0005; }
.mbtn { width: 64px; height: 35px; border: 1px solid #2276c4; border-radius: 4px; background: #fff; color: #1862ac; display: flex; align-items: center; justify-content: center; gap: 14px; }
.mbtn.wide { width: 221px; font-weight: 500; }
.mbtn svg { width: 16px; height: 14px; }
.mbtn.wide svg { width: 10px; height: 6px; }
.layer { position: absolute; left: 8px; top: 92px; width: 35px; height: 36px; border: 1px solid #2276c4; border-radius: 4px; background: #fff; display: grid; place-items: center; box-shadow: 0 2px 5px #0006; }
.layer i { width: 23px; height: 23px; border-radius: 3px; background: #1862ac; }
.maptype { position: absolute; right: 308px; top: 10px; height: 40px; display: flex; background: #fff; border-radius: 2px; box-shadow: 0 1px 4px #0005; font-size: 18px; color: #565656; }
.maptype button { padding: 0 17px; }
.maptype .on { font-weight: 500; color: #000; border-right: 1px solid #e6e6e6; }

.panel { flex: none; width: 460px; display: flex; flex-direction: column; background: #fff; }
.phead { background: #f3f5f9; height: 46px; padding-left: 20px; }
.ptitle { display: flex; justify-content: space-between; align-items: center; padding-right: 24px; font-size: 16px; height: 20px; }
.ptitle svg { width: 14px; height: 14px; }
.crumbs { display: flex; align-items: center; gap: 13px; padding-left: 4px; font-size: 15px; height: 30px; color: #777; }
.crumbs svg { width: 6px; height: 10px; }
.crumbs a { color: #2f80d0; }
.pscroll { display: flex; height: 200px; }
.pscroll dl { flex: 1; margin: -1px 0 0 24px; display: grid; grid-template-columns: 155px 225px; align-content: start; }
.pscroll dt { color: #8c8c8c; }
.pscroll dd { margin: 0; }
.vbar { flex: none; width: 17px; background: #f3f3f3; position: relative; display: flex; flex-direction: column; align-items: center; }
.vbar b { width: 13px; height: 305px; background: #c1c1c1; }
.up, .down { border: 4px solid transparent; }
.up { border-bottom: 5px solid #8c8c8c; border-top: 0; margin-top: 7px; }
.down { border-top: 5px solid #505050; border-bottom: 0; margin-top: auto; margin-bottom: 7px; }
.faint .down { border-top-color: #8c8c8c; }
.pfoot { margin-top: auto; height: 56px; background: #f3f5f9; padding: 0 20px; display: grid; grid-template-columns: repeat(3, 1fr); }
.pfoot button { display: flex; flex-direction: column; align-items: center; padding-top: 10px; font-size: 13px; line-height: 20px; color: #1862ac; }
.pfoot svg { width: 18px; height: 16px; }

.toolbar { flex: none; height: 40px; background: #1e447a; color: #fff; display: flex; align-items: center; padding-left: 10px; font-weight: 700; overflow: hidden; white-space: nowrap; }
.pill { width: 62px; height: 24px; border-radius: 12px; background: #d5e6f2; color: #1e4f8e; margin-right: 13px; }
.shifts { display: flex; align-items: center; justify-content: space-between; width: 214px; margin-left: 25px; }
.shifts svg { width: 10px; height: 6px; }
.switch { display: flex; align-items: center; gap: 12px; font-weight: 400; font-size: 15px; margin: 0 16px 3px 0; }
.switch input { appearance: none; margin: 0; width: 37px; height: 14px; border-radius: 7px; background: #12294a; position: relative; }
.switch input::before { content: ""; position: absolute; left: 0; top: -3px; width: 20px; height: 20px; border-radius: 50%; background: #fff; }
.zooms { display: flex; }
.zooms button { width: 34px; }
.collapse { width: 82px; margin-left: 13px; text-align: left; }

.gantt { flex: 1; min-height: 0; display: flex; flex-direction: column; }
.grow { flex: none; display: flex; border-bottom: 1px solid #ddd; }
.left { flex: none; width: 251px; border-right: 1px solid #ddd; display: flex; align-items: center; padding-left: 13px; }
.head1, .head2 { height: 32px; font-size: 13px; line-height: 30px; }
.head1 .left, .head2 .left { padding-bottom: 2px; }
.eye { width: 20px; height: 14px; margin: 0 80px 0 22px; }
.date { flex: 1; text-align: center; padding-left: 647px; }
.left input { appearance: none; margin: 0 18px 0 0; width: 16px; height: 16px; border: 2px solid #1862ac; border-radius: 2px; background: #fff; flex: none; }
.left input:checked { background: #1862ac url("data:image/svg+xml,%3Csvg xmlns='http://www.w3.org/2000/svg' viewBox='0 0 12 12'%3E%3Cpath d='M1.500 6l3 3 6-6.500' fill='none' stroke='white' stroke-width='2'/%3E%3C/svg%3E") center / 12px; }
.sort { width: 12px; height: 16px; margin-left: auto; }
.dl { width: 14px; height: 16px; margin: 0 13px 0 9px; }
.hours { flex: 1; min-width: 0; overflow: hidden; display: flex; padding-left: 30px; border-right: 1px solid #555; }
.hours span { flex: none; width: 60px; text-align: center; }
.zin { width: 54px; padding: 8px 0 0 8px; }
.zin svg { width: 14px; height: 14px; }
.gscroll { flex: 1; min-height: 0; display: flex; overflow: hidden; }
.rows { flex: 1; min-width: 0; }
.row { height: 70px; }
.veh { flex: 1; font-size: 12px; line-height: 19px; display: flex; flex-direction: column; white-space: nowrap; }
.veh small { font-size: 12px; color: #888; }
.veh strong { font-size: 14px; font-weight: 500; color: #222; }
.trk { width: 22px; height: 17px; color: #90989a; margin-right: 3px; }
.sel .trk { color: #36c52b; }
.lane { flex: 1; min-width: 0; display: flex; align-items: center; padding-left: 61px; overflow: hidden; color: #8a9291; background: repeating-linear-gradient(90deg, #fff 0 60px, #f5f8fc 60px 120px); }
.lane.late { padding-left: 120px; }
.sel .lane { color: #36c52b; background: linear-gradient(90deg, transparent 11px, #c8dcf86b 11px 455px, transparent 455px), repeating-linear-gradient(90deg, #fff 0 60px, #f5f8fc 60px 120px); }
.depot, .stop { flex: none; border: 1px solid currentColor; border-radius: 2px; display: flex; align-items: center; justify-content: space-around; background: #ffffff80; }
.depot { height: 32px; }
.stop { height: 30px; border-radius: 3px; font-weight: 500; }
.depot b { font-size: 12px; font-weight: 700; }
.depot svg { width: 20px; height: 20px; margin-top: 2px; }
.ln { flex: none; height: 4px; background: #8a9291; }
.dash { background: repeating-linear-gradient(90deg, #8a9291 0 8px, transparent 8px 12px); }
.sel .ln { align-self: flex-end; height: 62px; background: repeating-linear-gradient(90deg, #36c52b 0 8px, transparent 8px 11px) 0 25px / 100% 4px no-repeat, #b4d0f05c; }
.hbar { flex: none; height: 17px; background: #f3f3f3; display: flex; align-items: center; padding: 0 23px 0 6px; }
.htrack { flex: 1; padding: 0 10px 0 6px; }
.htrack b { display: block; height: 13px; width: 70%; background: #c1c1c1; }
.lt, .rt { border: 4px solid transparent; }
.lt { border-right: 5px solid #8c8c8c; border-left: 0; }
.rt { border-left: 5px solid #505050; border-right: 0; }

.stats { flex: none; margin-top: 15px; height: 46px; border-top: 1px solid #ddd; display: flex; gap: 30px; padding: 0 6px 0 15px; font-size: 12px; line-height: 17px; white-space: nowrap; overflow: hidden; }
.stats > div { display: flex; flex-direction: column; padding-top: 6px; }
.stats em { color: #2a71ba; }
.actions { margin-left: auto; display: flex; gap: 8px; padding: 4px 0 3px; font-size: 14px; font-weight: 700; }
.split { display: flex; width: 119px; background: #1862ac; color: #fff; border-radius: 4px; }
.split button:first-child { width: 78px; border-right: 1px solid #0f4a86; }
.split button:last-child { flex: 1; display: grid; place-items: center; }
.split svg { width: 10px; height: 6px; }
.act { width: 120px; border-radius: 4px; display: flex; align-items: center; justify-content: center; gap: 9px; box-shadow: 0 1px 3px #0005; }
.act svg { width: 16px; height: 20px; }
.unlock { background: #e2e2e2; color: #b0b0b0; }
.lock { background: #07803f; color: #fff; }
.reopt { background: #ffe04a; color: #4f4a2a; font-weight: 500; line-height: 16px; }
.reopt svg { height: 16px; }
.reopt span { width: 66px; white-space: normal; }

.scrim { position: fixed; inset: 1px 0 0; background: #00000080; display: flex; justify-content: center; align-items: flex-start; }
.modal { margin-top: 354px; width: 470px; background: #fff; border-radius: 4px; box-shadow: 0 11px 30px #0009; overflow: hidden; }
.mhead { display: flex; justify-content: space-between; align-items: flex-start; height: 69px; padding: 21px 23px 0 19px; border-bottom: 1px solid #ddd; }
.mhead h2 { margin: 0; font-size: 20px; line-height: 26px; font-weight: 500; color: #222; }
.mhead svg { width: 14px; height: 14px; margin-top: 3px; }
.modal p { margin: 0; padding: 15px 16px; height: 89px; border-bottom: 1px solid #ddd; }
.mfoot { background: #f8f9fb; height: 72px; padding: 15px 28px 17px; display: flex; gap: 6px; justify-content: flex-end; font-weight: 500; }
.cancel { width: 120px; height: 36px; margin-top: 3px; padding-bottom: 2px; background: #fff; color: #8f9295; border: 1px solid #bbb; border-radius: 4px; box-shadow: 0 2px 2px #0003; }
.confirm { width: 124px; background: #1862b0; color: #fff; font-weight: 700; border: 3px solid #f00; border-radius: 2px; box-shadow: 0 1px 2px #0005; }

.lang { position: fixed; left: 27px; bottom: 0; width: 132px; height: 41px; background: #fec514; color: #000; display: flex; align-items: center; justify-content: center; gap: 8px; }
.lang svg { width: 17px; height: 17px; }
.feedback { position: fixed; right: 0; top: 415px; width: 36px; height: 109px; background: #cf3507; color: #fff; border-radius: 3px 0 0 3px; display: flex; flex-direction: column-reverse; align-items: center; justify-content: flex-start; gap: 8px; padding: 0 0 14px 2px; }
.feedback svg { width: 20px; height: 16px; }
.feedback span { writing-mode: vertical-rl; transform: rotate(180deg); font: 12px/16px "DejaVu Sans Mono", monospace; }
.frame { position: fixed; right: 130px; bottom: 3px; width: 127px; height: 43px; border: 4px solid #f00; border-radius: 2px; }
.arrow { position: fixed; right: 252px; bottom: 40px; width: 470px; height: 322px; }
```
